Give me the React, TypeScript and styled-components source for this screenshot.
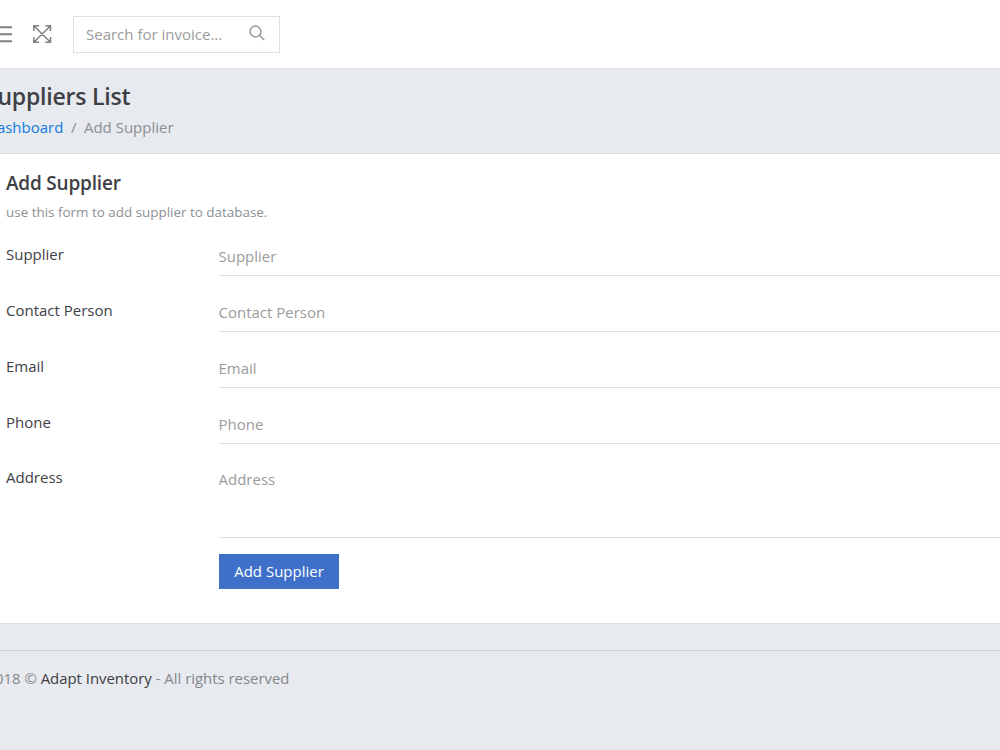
import React from "react";
import styled, { createGlobalStyle } from "styled-components";

const Global = createGlobalStyle`
  * { box-sizing: border-box; }
  html, body { margin: 0; }
  body { font-family: "Open Sans", sans-serif; font-size: 15px; line-height: 22px; color: #3e4045; background: #e7eaee; overflow: hidden; }
`;
const Page = styled.div`
  width: 1000px;
  height: 750px;
  overflow: hidden;
  background: #e7eaee;
`;
const TopBar = styled.header`
  height: 68px;
  background: #fff;
  display: flex;
  align-items: center;
`;
const MenuButton = styled.div`
  width: 32px;
  height: 36px;
  display: flex;
  align-items: center;
`;
const ExpandButton = styled.div`
  width: 41px;
  height: 36px;
  display: flex;
  align-items: center;
`;
const SearchBox = styled.label`
  width: 207px;
  height: 37px;
  border: 1px solid #dfdfdf;
  display: flex;
  align-items: center;
  justify-content: space-between;
  padding: 0 14px 0 12px;
  svg { flex: none; margin-top: -2px; }
`;
const Input = styled.input`
  display: block;
  border: 0;
  outline: 0;
  padding: 0;
  margin: 0;
  height: 22px;
  background: none;
  font: inherit;
  width: 100%;
  min-width: 0;
  &::placeholder { color: #9b9b9b; opacity: 1; }
`;
const Heading = styled.section`
  height: 86px;
  border-top: 1px solid #dfe1e3;
  border-bottom: 1px solid #dadcdf;
  padding-top: 11px;
`;
const Title = styled.h1`
  margin: 0 0 0 -15px;
  font-size: 23px;
  line-height: 32px;
  font-weight: 600;
  letter-spacing: -0.2px;
`;
const Crumbs = styled.nav`
  margin: 4px 0 0 -14px;
  display: flex;
  gap: 7.5px;
  color: #8c8f93;
  a { color: #0f7bdc; text-decoration: none; }
`;
const Panel = styled.main`
  height: 470px;
  background: #fff;
  border-bottom: 1px solid #dadcdf;
  padding: 15px 0 0 6px;
`;
const PanelTitle = styled.h2`
  margin: 0;
  font-size: 19px;
  line-height: 28px;
  font-weight: 600;
  letter-spacing: -0.2px;
`;
const Hint = styled.p`
  margin: 5px 0 18.2px;
  font-size: 13.43px;
  line-height: 20px;
  color: #8c9095;
`;
const Row = styled.div<{ $h: number }>`
  display: grid;
  grid-template-columns: 212.5px 1fr;
  height: ${p => p.$h}px;
`;
const Label = styled.label`
  padding-top: 3px;
`;
const Field = styled.div<{ $h: number }>`
  height: ${p => p.$h}px;
  border-bottom: 1px solid #dfdfdf;
  padding-top: 5px;
`;
const Submit = styled.button`
  margin: 0 0 0 213px;
  width: 120px;
  height: 35px;
  display: block;
  border: 0;
  background: #3e70c9;
  color: #fff;
  font: inherit;
  padding: 0 0 1px;
`;
const Footer = styled.footer`
  margin-top: 26px;
  border-top: 1px solid #cfd2d5;
  padding-top: 16px;
  color: #85888b;
`;
const FooterText = styled.p`
  margin: 0 0 0 -13.5px;
  font-size: 14.9px;
  strong { color: #3e4045; font-weight: 400; }
`;

const fields = ["Supplier", "Contact Person", "Email", "Phone"];

export default function App() {
  return (
    <Page>
      <Global />
      <TopBar>
        <MenuButton>
          <svg width="12" height="20" viewBox="0 0 12 20" stroke="#808080" strokeWidth="2"><path d="M0 3.3H12M0 10.3H12M0 17.3H12" /></svg>
        </MenuButton>
        <ExpandButton>
          <svg width="20" height="20" viewBox="0 0 20 20" fill="none" stroke="#808080" strokeWidth="1.5"><path d="M1.8 1.8L18.5 18.2M18.5 1.8L1.8 18.2M1.8 7V1.8H7M13.3 1.8H18.5V7M18.5 13V18.2H13.3M7 18.2H1.8V13" /></svg>
        </ExpandButton>
        <SearchBox>
          <Input placeholder="Search for invoice..." />
          <svg width="16" height="16" viewBox="0 0 16 16" fill="none" stroke="#999" strokeWidth="1.5"><circle cx="6.5" cy="6.5" r="5.4" /><path d="M10.4 10.4L15.2 15" /></svg>
        </SearchBox>
      </TopBar>
      <Heading>
        <Title>Suppliers List</Title>
        <Crumbs><a>Dashboard</a><span>/</span><span>Add Supplier</span></Crumbs>
      </Heading>
      <Panel>
        <PanelTitle>Add Supplier</PanelTitle>
        <Hint>use this form to add supplier to database.</Hint>
        {fields.map(f => (
          <Row key={f} $h={55.8}><Label>{f}</Label><Field $h={36}><Input placeholder={f} /></Field></Row>
        ))}
        <Row $h={91}><Label>Address</Label><Field $h={74.4}><Input placeholder="Address" /></Field></Row>
        <Submit>Add Supplier</Submit>
      </Panel>
      <Footer><FooterText>2018 © <strong>Adapt Inventory</strong> - All rights reserved</FooterText></Footer>
    </Page>
  );
}
